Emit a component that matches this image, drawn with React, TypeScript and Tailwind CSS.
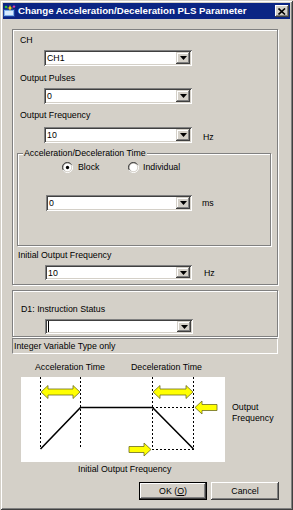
import React from "react";

const FONT = "font-['Liberation_Sans',Arial,sans-serif]";

function DropBtn() {
  return (
    <div className="w-[14px] h-full flex items-center justify-center bg-[#d4d0c8] shadow-[inset_-1px_-1px_#404040,inset_1px_1px_#d4d0c8,inset_-2px_-2px_#808080,inset_2px_2px_#ffffff]">
      <svg width="7" height="4" viewBox="0 0 7 4">
        <path d="M0 0H7L3.5 4Z" fill="#000" />
      </svg>
    </div>
  );
}

function Combo({ value, cls, caret }: { value: string; cls: string; caret?: boolean }) {
  return (
    <div className={`flex bg-white p-[2px] shadow-[inset_1px_1px_#808080,inset_-1px_-1px_#ffffff,inset_2px_2px_#404040,inset_-2px_-2px_#d4d0c8] ${cls}`}>
      <div className="flex-1 flex items-center pl-[1px] leading-[12px]">
        {caret ? <div className="w-px h-[11px] bg-black" /> : value}
      </div>
      <DropBtn />
    </div>
  );
}

function Radio({ checked }: { checked?: boolean }) {
  return (
    <svg width="11" height="11" viewBox="0 0 12 12">
      <path d="M11 3.5A5.5 5.5 0 1 0 3.5 11" fill="none" stroke="#808080" strokeWidth="1" />
      <path d="M2 9.5A4.5 4.5 0 0 1 9.5 2" fill="none" stroke="#404040" strokeWidth="1" />
      <circle cx="6" cy="6" r="4" fill="#fff" />
      <path d="M1 8.5A5.5 5.5 0 0 0 8.5 11A5.5 5.5 0 0 0 11 3.5" fill="none" stroke="#ffffff" strokeWidth="1" />
      {checked && <circle cx="6" cy="6" r="1.8" fill="#000" />}
    </svg>
  );
}

function Diagram() {
  const yellow = "#ffff00";
  const ol = "#6b6b20";
  return (
    <svg width="204" height="85" viewBox="0 0 204 85">
      <g stroke="#000" strokeWidth="1" strokeDasharray="2 2" fill="none">
        <line x1="19.5" y1="0" x2="19.5" y2="72" />
        <line x1="59.5" y1="0" x2="59.5" y2="72" />
        <line x1="131.5" y1="0" x2="131.5" y2="72" />
        <line x1="172.5" y1="0" x2="172.5" y2="72" />
        <line x1="131" y1="30.5" x2="173" y2="30.5" />
        <line x1="131" y1="72.5" x2="173" y2="72.5" />
      </g>
      <polyline points="19.5,72 59.5,30.5 131.5,30.5 172.5,72" fill="none" stroke="#000" strokeWidth="1.6" />
      <path d="M20 15 L27 8.5 L27 12 L52 12 L52 8.5 L59 15 L52 21.5 L52 18 L27 18 L27 21.5 Z" fill={yellow} stroke={ol} strokeWidth="0.8" />
      <path d="M132 15 L139 8.5 L139 12 L165 12 L165 8.5 L172 15 L165 21.5 L165 18 L139 18 L139 21.5 Z" fill={yellow} stroke={ol} strokeWidth="0.8" />
      <path d="M174 30.5 L181 24 L181 27.5 L196 27.5 L196 33.5 L181 33.5 L181 37 Z" fill={yellow} stroke={ol} strokeWidth="0.8" />
      <path d="M130 72.5 L123 66 L123 69.5 L108 69.5 L108 75.5 L123 75.5 L123 79 Z" fill={yellow} stroke={ol} strokeWidth="0.8" />
    </svg>
  );
}

export default function App() {
  return (
    <div className={`w-[293px] h-[510px] bg-[#d4d0c8] p-[3px] flex flex-col text-black text-[8.8px] leading-[12px] ${FONT} shadow-[inset_1px_1px_#d4d0c8,inset_-1px_-1px_#404040,inset_2px_2px_#ffffff,inset_-2px_-2px_#808080]`}>
      {/* title bar */}
      <div className="h-[16px] w-[287px] bg-[#0b2584] flex items-center">
        <svg width="13" height="12" viewBox="0 0 13 12">
          <rect x="0.5" y="4.5" width="11" height="7" fill="#7fb0e8" stroke="#1c3f9c" />
          <rect x="2" y="6" width="8" height="4" fill="#d8ecff" />
          <path d="M7 0 L8 2.5 L10.5 3 L8 3.6 L7 6 L6 3.6 L3.5 3 L6 2.5 Z" fill="#ffd400" />
          <circle cx="3" cy="2" r="1.3" fill="#2fbf3a" />
          <circle cx="11" cy="1.6" r="1.2" fill="#e03bb0" />
        </svg>
        <span className="ml-[2px] text-white font-bold text-[9.7px] leading-[12px] whitespace-nowrap">
          Change Acceleration/Deceleration PLS Parameter
        </span>
        <div className="ml-auto mr-[1px] w-[14px] h-[12px] flex items-center justify-center bg-[#d4d0c8] shadow-[inset_-1px_-1px_#404040,inset_1px_1px_#ffffff,inset_-2px_-2px_#808080]">
          <svg width="8" height="7" viewBox="0 0 8 7">
            <path d="M0.5 0.5L7 6.5M7 0.5L0.5 6.5" stroke="#000" strokeWidth="1.6" />
          </svg>
        </div>
      </div>

      {/* group 1 */}
      <div className="ml-[9px] mt-[10px] w-[266px] h-[256px] border border-[#808080] shadow-[inset_1px_1px_#ffffff,1px_1px_#ffffff] flex flex-col">
        <div className="mt-[4px] ml-[7px] h-[12px]">CH</div>
        <Combo value="CH1" cls="mt-[4px] ml-[31px] w-[148px] h-[16px]" />
        <div className="mt-[6px] ml-[7px] h-[12px]">Output Pulses</div>
        <Combo value="0" cls="mt-[4px] ml-[31px] w-[148px] h-[16px]" />
        <div className="mt-[5px] ml-[7px] h-[12px]">Output Frequency</div>
        <div className="mt-[6px] ml-[31px] flex items-center">
          <Combo value="10" cls="w-[148px] h-[16px]" />
          <span className="ml-[11px] mt-[4px]">Hz</span>
        </div>

        {/* inner group */}
        <div className="relative mt-[10px] ml-[4px] w-[254px] h-[93px] border border-[#808080] shadow-[inset_1px_1px_#ffffff,1px_1px_#ffffff] flex flex-col">
          <span className="absolute -top-[7px] left-[5px] px-[1px] bg-[#d4d0c8] leading-[12px]">
            Acceleration/Deceleration Time
          </span>
          <div className="mt-[7px] ml-[44px] h-[12px] flex items-center">
            <div className="w-[66px] flex items-center">
              <Radio checked />
              <span className="ml-[5px]">Block</span>
            </div>
            <div className="flex items-center">
              <Radio />
              <span className="ml-[4px]">Individual</span>
            </div>
          </div>
          <div className="mt-[22px] ml-[28px] flex items-center">
            <Combo value="0" cls="w-[146px] h-[16px]" />
            <span className="ml-[10px]">ms</span>
          </div>
        </div>

        <div className="mt-[3px] ml-[5px] h-[12px]">Initial Output Frequency</div>
        <div className="mt-[4px] ml-[32px] flex items-center">
          <Combo value="10" cls="w-[147px] h-[15px]" />
          <span className="ml-[12px] mt-[1px]">Hz</span>
        </div>
      </div>

      {/* group 2 */}
      <div className="ml-[9px] mt-[5px] w-[266px] h-[47px] border border-[#808080] shadow-[inset_1px_1px_#ffffff,1px_1px_#ffffff] flex flex-col">
        <div className="mt-[12px] ml-[8px] h-[12px]">D1: Instruction Status</div>
        <Combo value="" caret cls="mt-[4px] ml-[32px] w-[148px] h-[15px]" />
      </div>

      {/* status */}
      <div className="ml-[9px] mt-[1px] w-[266px] h-[16px] border border-t-[#808080] border-l-[#808080] border-b-[#ffffff] border-r-[#ffffff] flex items-center pl-[1px]">
        Integer Variable Type only
      </div>

      {/* diagram */}
      <div className="mt-[7px] h-[12px] flex">
        <span className="ml-[32px] w-[96px]">Acceleration Time</span>
        <span>Deceleration Time</span>
      </div>
      <div className="mt-[4px] flex">
        <div className="ml-[18px] w-[204px] h-[85px] bg-white">
          <Diagram />
        </div>
        <div className="ml-[7px] mt-[25px] leading-[11px]">
          Output
          <br />
          Frequency
        </div>
      </div>
      <div className="mt-[1px] ml-[75px] h-[12px]">Initial Output Frequency</div>

      {/* buttons */}
      <div className="mt-[7px] ml-[136px] flex">
        <div className="w-[68px] h-[18px] border border-black">
          <div className="w-full h-full flex items-center justify-center shadow-[inset_-1px_-1px_#404040,inset_1px_1px_#ffffff,inset_-2px_-2px_#808080]">
            OK (<u>O</u>)
          </div>
        </div>
        <div className="ml-[4px] w-[68px] h-[18px] flex items-center justify-center shadow-[inset_-1px_-1px_#404040,inset_1px_1px_#ffffff,inset_-2px_-2px_#808080]">
          Cancel
        </div>
      </div>
    </div>
  );
}
